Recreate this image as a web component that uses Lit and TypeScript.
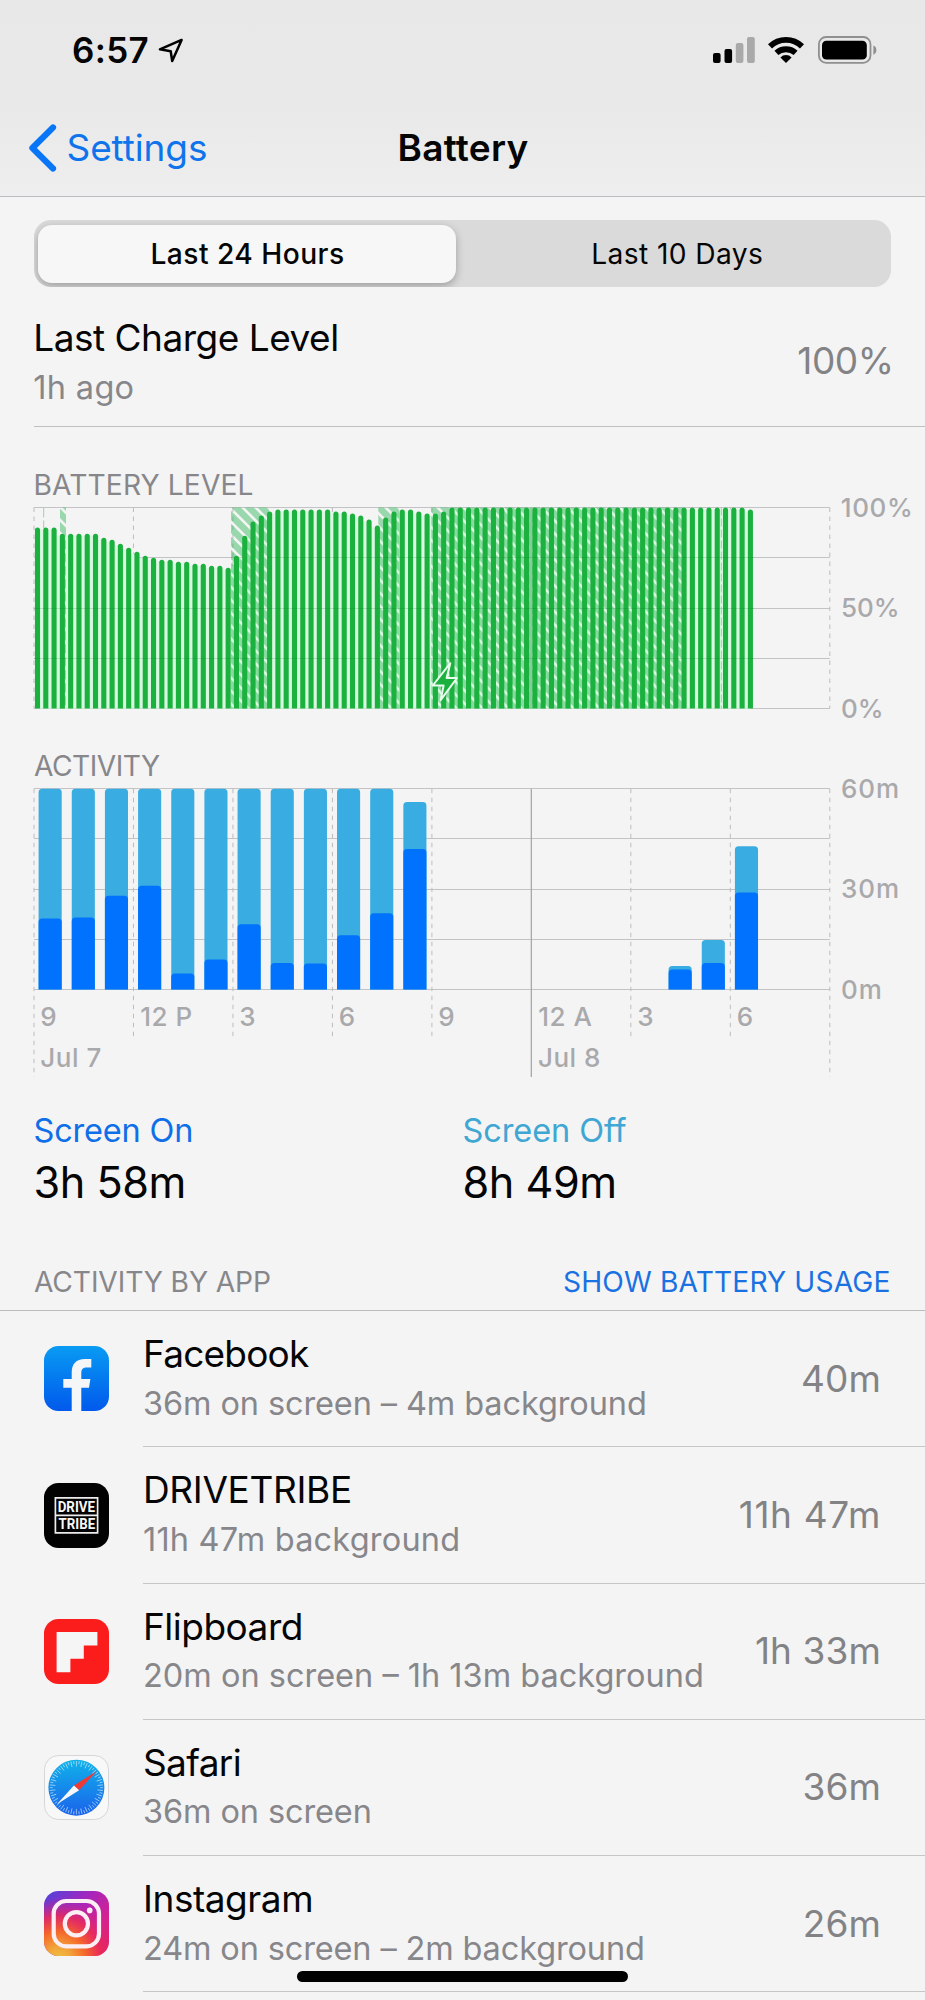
import { LitElement, html, svg, css } from 'lit';
import { customElement } from 'lit/decorators.js';

/* ---------- shared chart geometry (page pixels) ---------- */
const LEFT = 34;
const RIGHT = 829.8;
const SPAN = (RIGHT - LEFT) / 8; // three hours
const ROW = 50.2;

const LEVELS: number[] = [
  90, 90, 90, 87, 87, 87, 87, 87, 85, 84, 82, 80, 78, 76, 75, 74, 74, 73, 73, 72, 72, 71, 71, 70,
  76, 86, 93, 96, 98, 99, 99, 99, 99, 99, 99, 99, 98, 98, 97, 96, 94, 91, 95, 98, 99, 99, 98, 97,
  97, 98, ...Array(36).fill(100), 99,
];

/* spans of time spent on the charger, as [x, width] */
const CHARGING: [number, number][] = [[60, 6], [231, 38], [378.3, 21], [431.3, 253.7]];

/* [hour index, minutes in total, minutes with the screen on] */
const ACTIVITY: [number, number, number][] = [
  [0, 60, 21.2], [1, 60, 21.5], [2, 60, 28], [3, 60, 31], [4, 60, 4.8], [5, 60, 9],
  [6, 60, 19.5], [7, 60, 7.9], [8, 60, 7.8], [9, 60, 16.2], [10, 60, 22.8], [11, 56, 42],
  [19, 7, 6], [20, 14.8, 7.9], [21, 42.8, 29],
];

@customElement('battery-level-chart')
class BatteryLevelChart extends LitElement {
  static styles = css`
    :host { display: block; height: 246px; }
    svg { display: block; overflow: visible; }
    .grid { stroke: #c3c3c5; stroke-width: 1; }
    .dash { stroke: #bdbdc0; stroke-width: 1; stroke-dasharray: 4.5 4.5; }
    .bar { fill: #1bb13e; }
    .gap { fill: #d8f8df; }
    .tint { fill: #1bb148; fill-opacity: .42; }
    .over { stroke: #0b7a2a; stroke-opacity: .2; stroke-width: 1; }
    .bolt { fill: #1bb13e; stroke: #eafbee; stroke-width: 2; stroke-linejoin: round; }
    text { font: 500 26px Inter, "Liberation Sans", sans-serif; fill: #a9a9ac; }
    .l100 { letter-spacing: .65px; }
    .l50 { letter-spacing: -.1px; }
  `;

  render() {
    const top = 507.5;
    const bottom = top + ROW * 4 + 0.3;
    const pitch = SPAN / 12;
    const cx = (i: number) => 37.5 + i * pitch;
    const y = (v: number) => bottom - (v / 100) * (bottom - top);
    return html`
      <svg width="925" height="246" viewBox="0 502 925 246">
        <defs>
          <pattern id="hatch" width="13" height="13" patternUnits="userSpaceOnUse" x="231" y="507">
            <path class="tint" d="M0 3.8 V13 H9.2 Z M0 0 H9.2 L13 3.8 V13 Z" />
          </pattern>
        </defs>
        ${[0, 1, 2, 3, 4].map((r) => svg`<line class="grid" x1=${LEFT} x2=${RIGHT} y1=${Math.floor(top + r * 50.25) + 0.5} y2=${Math.floor(top + r * 50.25) + 0.5} />`)}
        ${[0, 1, 2, 3, 4, 6, 7, 8].map((c) => svg`<line class="dash" x1=${LEFT + c * SPAN} x2=${LEFT + c * SPAN} y1=${top} y2=${bottom} />`)}
        <line x1="43.7" x2="43.7" y1=${top} y2="528" stroke="#9fcfae" stroke-dasharray="10 3" />
        ${LEVELS.slice(0, -1).map((v, i) => {
          const t = y(Math.min(v, LEVELS[i + 1])) + 2;
          return svg`<rect class="gap" x=${cx(i)} y=${t} width=${pitch} height=${bottom - t} />`;
        })}
        ${CHARGING.map(([x, w]) => svg`<rect fill="url(#hatch)" x=${x} y=${top} width=${w} height=${bottom - top} />`)}
        <rect x="529.3" y=${top} width="3" height=${bottom - top} fill="#86cc9a" />
        <line x1="721.3" x2="721.3" y1=${top} y2=${bottom} stroke="#8fd6a2" stroke-dasharray="8 3" />
        ${LEVELS.map((v, i) => {
          const t = y(v);
          const x = cx(i) - 2.55;
          return svg`<path class="bar" d="M${x} ${bottom} V${t + 2.55} a2.55 2.55 0 0 1 5.1 0 V${bottom} Z" />`;
        })}
        ${[1, 2, 3].map((r) => {
          const gy = Math.floor(top + r * 50.25) + 0.5;
          return svg`<line class="over" x1=${r === 1 ? 268 : LEFT} x2="754" y1=${gy} y2=${gy} />`;
        })}
        <path class="bolt" d="M450.3 663.2 L432.8 685.5 H443.6 L440.6 700.2 L457 678 H446.6 Z" />
        <text class="l100" x="840.7" y="517">100%</text>
        <text class="l50" x="841" y="617.2">50%</text>
        <text class="l50" x="841" y="717.5">0%</text>
      </svg>`;
  }
}

@customElement('activity-chart')
class ActivityChart extends LitElement {
  static styles = css`
    :host { display: block; height: 318px; }
    svg { display: block; overflow: visible; }
    .grid { stroke: #c3c3c5; stroke-width: 1; }
    .dash { stroke: #bdbdc0; stroke-width: 1; stroke-dasharray: 4.5 4.5; }
    .midnight { stroke: #a2a2a5; stroke-width: 1.2; }
    .off { fill: #39ade2; }
    .on { fill: #0072fd; }
    text { font: 500 26px Inter, "Liberation Sans", sans-serif; fill: #a9a9ac; letter-spacing: .5px; }
    .min { letter-spacing: .9px; }
  `;

  render() {
    const top = 788.7;
    const bottom = 989.5;
    const y = (m: number) => bottom - (m / 60) * (bottom - top);
    const bar = (cls: string, h: number, m: number) => {
      const x = LEFT + 4.6 + (h * SPAN) / 3;
      return svg`<path class=${cls} d="M${x} ${bottom} V${y(m) + 3.6} q0 -3.6 3.6 -3.6 h15.9 q3.6 0 3.6 3.6 V${bottom} Z" />`;
    };
    const hours = ['9', '12 P', '3', '6', '9', '12 A', '3', '6'];
    return html`
      <svg width="925" height="318" viewBox="0 782 925 318">
        ${[0, 1, 2, 3, 4].map((r) => {
          const gy = Math.floor(top + r * ROW) + 0.5;
          return svg`<line class="grid" x1=${LEFT} x2=${RIGHT} y1=${gy} y2=${gy} />`;
        })}
        ${[0, 1, 2, 3, 4, 6, 7, 8].map((c) => svg`<line class="dash" x1=${LEFT + c * SPAN} x2=${LEFT + c * SPAN} y1=${top} y2=${c % 8 ? 1040 : 1077} />`)}
        <line class="midnight" x1="531.3" x2="531.3" y1=${top} y2="1077" />
        ${ACTIVITY.map(([h, total, on]) => [bar('off', h, total), bar('on', h, on)])}
        <text class="min" x="841" y="798">60m</text>
        <text class="min" x="841" y="898.3">30m</text>
        <text class="min" x="841" y="998.7">0m</text>
        ${hours.map((t, i) => svg`<text x=${LEFT + i * SPAN + (t.startsWith('12') ? 6.8 : 6.3)} y="1025.8">${t}</text>`)}
        <text x="40.3" y="1066.7">Jul 7</text>
        <text x="538" y="1066.7">Jul 8</text>
      </svg>`;
  }
}

/* ---------- app icons ---------- */
const ticks = Array.from({ length: 60 }, (_, i) => i * 6);

const icons = {
  facebook: html`<svg width="65" height="65" viewBox="0 0 65 65">
    <defs><linearGradient id="fb" x2="0" y2="1"><stop offset="0" stop-color="#089bf3" /><stop offset="1" stop-color="#0159ec" /></linearGradient></defs>
    <rect width="65" height="65" rx="14.5" fill="url(#fb)" />
    <path fill="#f5f6f7" d="M27.7 65 V41.7 H19.3 V33 H27.7 V27 C27.7 18 32 13 41 13 H47.3 V21.6 H43 C39 21.6 37.3 23.4 37.3 27 V33 H46.4 L45 41.7 H37.3 V65 Z" />
  </svg>`,
  drivetribe: html`<svg width="65" height="65" viewBox="0 0 65 65">
    <rect width="65" height="65" rx="14.5" fill="#020203" />
    <path fill="none" stroke="#ececec" stroke-width="1.7" d="M11.4 14.8 H53.6 V49.8 H11.4 Z M11.4 32.3 H53.6" />
    <g fill="#f8f8f8" font-family="Roboto, sans-serif" font-weight="700" font-size="15.2">
      <text x="13.7" y="29.4" textLength="37.4" lengthAdjust="spacingAndGlyphs">DRIVE</text>
      <text x="14.6" y="46.4" textLength="36.5" lengthAdjust="spacingAndGlyphs">TRIBE</text>
    </g>
  </svg>`,
  flipboard: html`<svg width="65" height="65" viewBox="0 0 65 65">
    <rect width="65" height="65" rx="14.5" fill="#fb1d1c" />
    <path fill="#f6f5f5" d="M12.6 13 H53.4 V26.4 H39.8 V39.8 H26.4 V53.2 H12.6 Z" />
  </svg>`,
  safari: html`<svg width="65" height="65" viewBox="0 0 65 65">
    <defs><linearGradient id="sf" x2="0" y2="1"><stop offset="0" stop-color="#10b2ea" /><stop offset="1" stop-color="#1b62ea" /></linearGradient></defs>
    <rect x=".5" y=".5" width="64" height="64" rx="14" fill="#f8f8f8" stroke="#d5d6d7" />
    <circle cx="32.4" cy="32.7" r="28" fill="url(#sf)" />
    <g stroke="#d9efff" stroke-opacity=".75" stroke-width=".8">
      ${ticks.map((a) => svg`<line x1="32.4" x2="32.4" y1="6" y2=${a % 12 ? 9 : 11.5} transform="rotate(${a} 32.4 32.7)" />`)}
    </g>
    <path fill="#ee3a35" d="M52.9 15.9 L29.9 30.5 L35.1 35.2 Z" />
    <path fill="#f7f8fa" d="M12.9 49.2 L29.9 30.5 L35.1 35.2 Z" />
  </svg>`,
  instagram: html`<svg width="65" height="65" viewBox="0 0 65 65">
    <defs>
      <linearGradient id="ig1" x1="0" y1="0" x2="1" y2=".9"><stop offset="0" stop-color="#4b45dc" /><stop offset=".4" stop-color="#a326bf" /><stop offset=".75" stop-color="#d6218f" /><stop offset="1" stop-color="#e9215e" /></linearGradient>
      <radialGradient id="ig2" cx=".22" cy="1.05" r=".95"><stop offset="0" stop-color="#eec342" /><stop offset=".2" stop-color="#f2a53a" /><stop offset=".45" stop-color="#f5662a" /><stop offset=".7" stop-color="#ea2a58" stop-opacity=".85" /><stop offset="1" stop-color="#d0208f" stop-opacity="0" /></radialGradient>
    </defs>
    <rect width="65" height="65" rx="14.5" fill="url(#ig1)" />
    <rect width="65" height="65" rx="14.5" fill="url(#ig2)" />
    <rect x="9.7" y="10" width="45.3" height="45.3" rx="12.5" fill="none" stroke="#fbeff3" stroke-width="4.2" />
    <circle cx="32.4" cy="32.7" r="11.6" fill="none" stroke="#fbeff3" stroke-width="4.2" />
    <circle cx="45.7" cy="19.4" r="2.8" fill="#fbeff3" />
  </svg>`,
};

const APPS: { id: keyof typeof icons; name: string; detail: string; time: string }[] = [
  { id: 'facebook', name: 'Facebook', detail: '36m on screen – 4m background', time: '40m' },
  { id: 'drivetribe', name: 'DRIVETRIBE', detail: '11h 47m background', time: '11h 47m' },
  { id: 'flipboard', name: 'Flipboard', detail: '20m on screen – 1h 13m background', time: '1h 33m' },
  { id: 'safari', name: 'Safari', detail: '36m on screen', time: '36m' },
  { id: 'instagram', name: 'Instagram', detail: '24m on screen – 2m background', time: '26m' },
];

@customElement('app-root')
class AppRoot extends LitElement {
  static styles = css`
    :host {
      display: block; position: relative; width: 925px; height: 2000px; overflow: hidden;
      background: #f4f4f4; color: #050505; font-family: Inter, "Liberation Sans", sans-serif;
    }
    * { box-sizing: border-box; }
    svg { display: block; flex: none; }

    header { height: 197px; background: linear-gradient(#e8e8e9, #e9e9ea 55%, #eeeeef); border-bottom: 1px solid #bdbdc1; }
    .status { display: flex; align-items: center; height: 100px; padding: 0 48px 0 72px; }
    .clock { font-size: 35px; font-weight: 600; letter-spacing: .3px; }
    .arrow { margin-left: 8.5px; }
    .system { display: flex; align-items: center; margin-left: auto; }
    .wifi { margin: 0 13px; }
    .nav { display: grid; grid-template-columns: 1fr auto 1fr; align-items: center; height: 95px; font-size: 37px; }
    .back { display: flex; align-items: center; gap: 9.5px; padding-left: 28px; color: #0f74ec; letter-spacing: -.1px; }
    .title { margin-left: 1px; font-weight: 600; letter-spacing: .25px; }

    .segments { display: flex; height: 67px; margin: 23px 34px 0; border-radius: 17px; background: #dadada; overflow: hidden; font-size: 28.2px; }
    .segment { flex: 1; display: flex; align-items: center; justify-content: center; padding: 1px 0 0 1px; letter-spacing: .4px; }
    .segment.current { flex: none; width: 418px; margin: 4.5px 6.5px 4.5px 4px; border-radius: 14px; background: #f6f7f6; box-shadow: 0 3px 9px rgba(0, 0, 0, .28); font-weight: 500; letter-spacing: .45px; }

    .charge { display: flex; justify-content: space-between; height: 140px; margin-left: 34px; padding-top: 28px; border-bottom: 1px solid #c0c0c3; }
    .charge .text { margin-left: -.7px; }
    .name { font-size: 37px; line-height: 46px; white-space: nowrap; }
    .detail { margin-top: 6px; font-size: 32.5px; line-height: 40px; color: #87878b; white-space: nowrap; }
    .charge .name { letter-spacing: -.5px; }
    .charge .detail { margin-top: 6.6px; letter-spacing: .31px; }
    .value { font-size: 37px; line-height: 46px; color: #838386; white-space: nowrap; }
    .charge .value { margin: 22.5px 31.5px 0 0; letter-spacing: -.48px; }

    .label { font-size: 28.2px; line-height: 34px; color: #87878b; }
    .level { margin: 41px 0 0 33.5px; letter-spacing: .12px; }
    .activity { margin-left: 34px; letter-spacing: -.5px; line-height: 36px; height: 34px; }

    .totals { display: grid; grid-template-columns: 429px 1fr; margin-top: 11px; padding-left: 33.5px; }
    .kind { font-size: 32.5px; line-height: 40px; letter-spacing: -.18px; color: #0f6fe8; }
    .kind.off { letter-spacing: -.1px; color: #40a6d3; }
    .sum { margin-top: 4.5px; font-size: 43.2px; line-height: 52px; letter-spacing: -.45px; }

    .by-app { display: flex; justify-content: space-between; height: 103.5px; padding: 57.6px 34.5px 0 34px; border-bottom: 1px solid #bcbcbf; }
    .by-app .label { letter-spacing: -.12px; }
    .by-app .usage { letter-spacing: .13px; color: #1a71e2; }

    .row { display: flex; height: 136.25px; padding-left: 44.4px; }
    .icon { margin-top: 35.3px; }
    .body { flex: 1; display: flex; justify-content: space-between; margin-left: 33.6px; padding-top: 20px; border-bottom: 1px solid #c6c6c8; }
    .body .detail { margin-top: 6.5px; letter-spacing: -.11px; }
    .body .value { margin: 24.5px 44px 0 0; letter-spacing: .1px; }
    .facebook .name { letter-spacing: -.78px; }
    .drivetribe .name { letter-spacing: -.34px; }
    .drivetribe .detail { letter-spacing: .2px; }
    .drivetribe .value { letter-spacing: .65px; }
    .flipboard .name { letter-spacing: -.5px; }
    .flipboard .detail { letter-spacing: 0; }
    .safari .name { letter-spacing: -.65px; }
    .instagram .name { letter-spacing: -.45px; }
    .instagram .detail { letter-spacing: -.14px; }

    .home { position: absolute; left: 297px; top: 1971px; width: 331px; height: 11px; border-radius: 6px; background: #000; }
  `;

  render() {
    return html`
      <header>
        <div class="status">
          <span class="clock">6:57</span>
          <svg class="arrow" width="27" height="26" viewBox="157 37 27 26">
            <path d="M181.6 39.9 L159.9 49.3 L170.7 51.3 L172.2 61 Z" fill="none" stroke="#000" stroke-width="2.5" stroke-linejoin="round" />
          </svg>
          <div class="system">
            <svg width="42" height="28" viewBox="713 36 42 28">
              <rect x="713" y="53" width="7.6" height="10" rx="2" />
              <rect x="724.5" y="49" width="7.6" height="14" rx="2" />
              <rect x="735.8" y="43" width="7.6" height="20" rx="2" fill="#a9a9aa" />
              <rect x="747" y="37" width="7.8" height="26" rx="2" fill="#a9a9aa" />
            </svg>
            <svg class="wifi" width="36" height="28" viewBox="0 0 36 28">
              <g fill="none" stroke="#000">
                <path stroke-width="5.8" d="M2 10.4 A23 23 0 0 1 34 10.4" />
                <path stroke-width="5.8" d="M8.4 16.9 A14.4 14.4 0 0 1 27.6 16.9" />
              </g>
              <path d="M12.4 21.4 A8 8 0 0 1 23.6 21.4 L18 27 Z" />
            </svg>
            <svg width="60" height="28" viewBox="817 36 60 28">
              <rect x="818.9" y="37" width="51.6" height="25.8" rx="7.2" fill="none" stroke="#8f8f90" stroke-width="1.8" />
              <rect x="822" y="40.8" width="44.8" height="18.8" rx="4.4" />
              <path d="M873.4 45.5 C877.4 47 877.4 53.2 873.4 54.8 Z" fill="#8f8f90" />
            </svg>
          </div>
        </div>
        <div class="nav">
          <div class="back">
            <svg width="29" height="48" viewBox="28 123.7 29 48">
              <path d="M53 127.2 L32.4 147.7 L53 168.2" fill="none" stroke="#0876f6" stroke-width="6.2" stroke-linecap="round" stroke-linejoin="round" />
            </svg>
            <span>Settings</span>
          </div>
          <span class="title">Battery</span>
        </div>
      </header>

      <div class="segments">
        <div class="segment current">Last 24 Hours</div>
        <div class="segment">Last 10 Days</div>
      </div>

      <section class="charge">
        <div class="text">
          <div class="name">Last Charge Level</div>
          <div class="detail">1h ago</div>
        </div>
        <div class="value">100%</div>
      </section>

      <div class="label level">BATTERY LEVEL</div>
      <battery-level-chart></battery-level-chart>
      <div class="label activity">ACTIVITY</div>
      <activity-chart></activity-chart>

      <section class="totals">
        <div><div class="kind">Screen On</div><div class="sum">3h 58m</div></div>
        <div><div class="kind off">Screen Off</div><div class="sum">8h 49m</div></div>
      </section>

      <div class="by-app">
        <span class="label">ACTIVITY BY APP</span>
        <span class="label usage">SHOW BATTERY USAGE</span>
      </div>
      ${APPS.map((a) => html`
        <div class="row ${a.id}">
          <div class="icon">${icons[a.id]}</div>
          <div class="body">
            <div><div class="name">${a.name}</div><div class="detail">${a.detail}</div></div>
            <div class="value">${a.time}</div>
          </div>
        </div>`)}
      <div class="home"></div>
    `;
  }
}
